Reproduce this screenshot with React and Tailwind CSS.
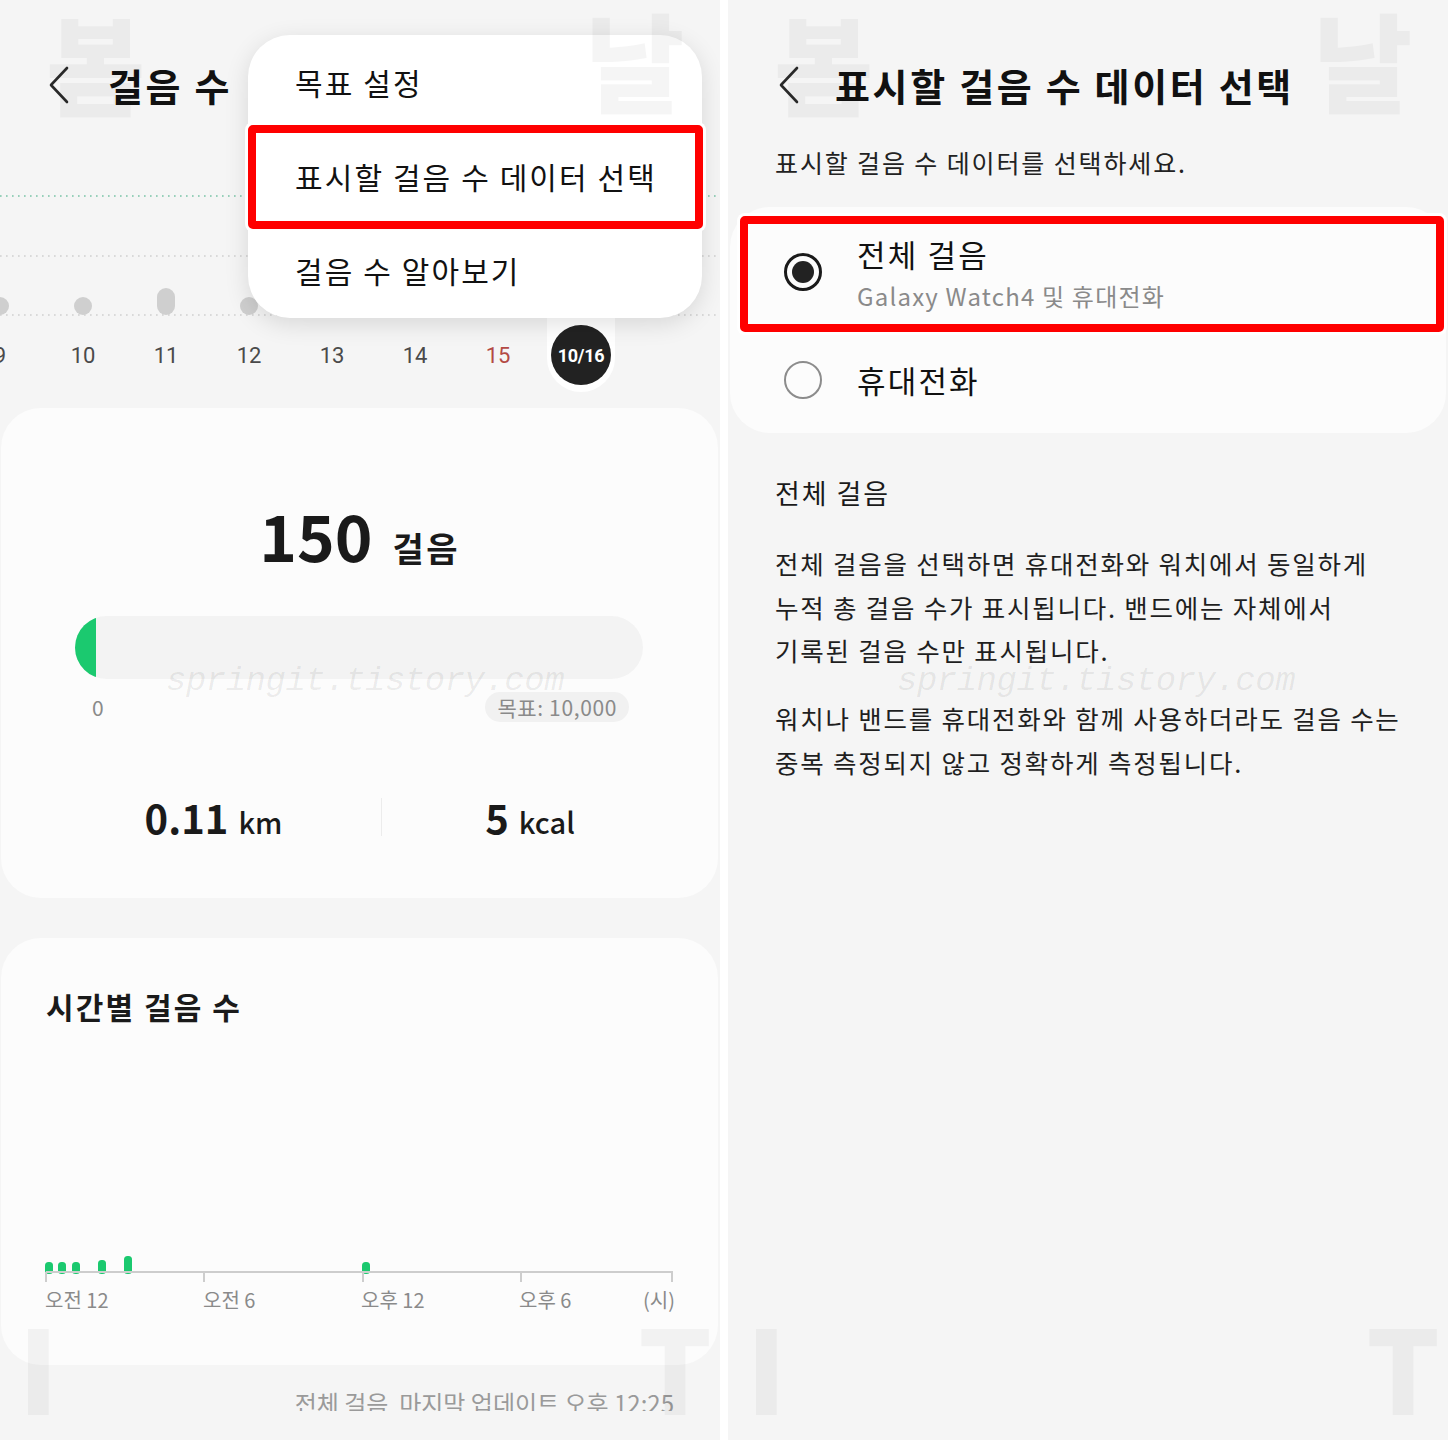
import React from "react";

const Chevron = () => (
  <svg width="22" height="38" viewBox="0 0 22 38" className="shrink-0 block">
    <polyline points="19,2 3,19 19,36" fill="none" stroke="#2a2a2a" strokeWidth="2.6" strokeLinecap="round" strokeLinejoin="round" />
  </svg>
);

const Watermarks = () => (
  <div className="pointer-events-none absolute inset-0 z-40 font-black text-black/[0.04]">
    <span className="absolute left-[46px] top-[7px] text-[108px] leading-none">봄</span>
    <span className="absolute left-[585px] top-[4px] text-[108px] leading-none">날</span>
    <span className="absolute left-[18px] top-[1306px] text-[116px] leading-none">I</span>
    <span className="absolute left-[638px] top-[1306px] text-[116px] leading-none">T</span>
  </div>
);

const SiteMark = ({ left }) => (
  <div className={`pointer-events-none absolute top-[664px] z-40 font-['Liberation_Mono',monospace] italic text-[34px] leading-none tracking-[-0.5px] text-black/[0.07] ${left}`}>
    springit.tistory.com
  </div>
);

function LeftPanel() {
  const dates = ["9", "10", "11", "12", "13", "14", "15"];
  const bars = [
    { x: 45, top: 1262 },
    { x: 58, top: 1262 },
    { x: 72, top: 1262 },
    { x: 98, top: 1260 },
    { x: 124, top: 1256 },
    { x: 362, top: 1262 },
  ];
  return (
    <div className="relative w-[720px] h-full shrink-0 bg-[#f5f5f5] overflow-hidden">
      {/* header */}
      <div className="flex items-center h-[50px] mt-[60px] pl-[48px]">
        <Chevron />
        <span className="ml-[38px] text-[38px] font-bold leading-none text-[#111] tracking-[0.07em]">걸음 수</span>
      </div>

      {/* weekly chart */}
      <svg width="720" height="208" className="block">
        <line x1="0" y1="86" x2="720" y2="86" stroke="#78c3a6" strokeWidth="1.6" strokeDasharray="1.6 4.4" />
        <line x1="0" y1="146" x2="720" y2="146" stroke="#cfcfcf" strokeWidth="1.6" strokeDasharray="1.6 4.4" />
        <line x1="0" y1="205" x2="720" y2="205" stroke="#cfcfcf" strokeWidth="1.6" strokeDasharray="1.6 4.4" />
        <circle cx="0" cy="196" r="9" fill="#cfcfcf" />
        <circle cx="83" cy="196" r="9" fill="#cfcfcf" />
        <rect x="157" y="178" width="18" height="27" rx="9" fill="#cfcfcf" />
        <circle cx="249" cy="196" r="9" fill="#cfcfcf" />
      </svg>

      {/* date labels */}
      <div className="flex h-[74px] -ml-[41.5px]">
        {dates.map((d) => (
          <div
            key={d}
            className={`w-[83px] shrink-0 flex items-center justify-center text-[22px] font-['Roboto',sans-serif] ${d === "15" ? "text-[#b34a44]" : "text-[#4a4a4a]"}`}
          >
            {d}
          </div>
        ))}
        <div className="w-[83px] shrink-0 flex justify-center">
          <div className="w-[68px] h-full bg-white rounded-b-[34px] flex items-center justify-center">
            <div className="w-[60px] h-[60px] rounded-full bg-[#222] flex items-center justify-center text-white text-[18px] font-bold font-['Roboto',sans-serif] tracking-[-0.3px]">
              10/16
            </div>
          </div>
        </div>
      </div>

      {/* summary card */}
      <div className="mt-[16px] ml-[1px] w-[717px] h-[490px] rounded-[40px] bg-[#fcfcfc] flex flex-col">
        <div className="pt-[94px] flex items-baseline justify-center text-[#1a1a1a]">
          <span className="text-[64px] font-bold leading-none">150</span>
          <span className="ml-[20px] text-[34px] font-bold leading-none tracking-[0.07em]">걸음</span>
        </div>
        <div className="mt-[50px] ml-[74px] w-[568px] h-[63px] rounded-full bg-[#f3f3f3] overflow-hidden">
          <div className="w-[21px] h-full bg-[#1bc96f]" />
        </div>
        <div className="mt-[13px] ml-[74px] w-[554px] flex items-center justify-between">
          <span className="pl-[17px] text-[21px] text-[#8a8a8a] leading-none">0</span>
          <span className="h-[30px] px-[12px] rounded-full bg-[#f1f1f1] flex items-center text-[21px] text-[#8a8a8a] leading-none tracking-[0.03em]">
            목표: 10,000
          </span>
        </div>
        <div className="mt-[75px] ml-[45px] flex items-center">
          <div className="w-[335px] flex items-baseline justify-center text-[#1a1a1a]">
            <span className="text-[40px] font-bold leading-none">0.11</span>
            <span className="ml-[10px] text-[29px] font-medium leading-none">km</span>
          </div>
          <div className="w-px h-[38px] bg-[#ececec]" />
          <div className="w-[296px] flex items-baseline justify-center text-[#1a1a1a]">
            <span className="text-[40px] font-bold leading-none">5</span>
            <span className="ml-[10px] text-[29px] font-medium leading-none">kcal</span>
          </div>
        </div>
      </div>

      {/* hourly card */}
      <div className="mt-[40px] ml-[1px] w-[717px] h-[427px] rounded-[40px] bg-[#fcfcfc] flex flex-col">
        <div className="pt-[46px] pl-[45px] text-[30px] font-bold leading-[44px] text-[#1a1a1a] tracking-[0.07em]">시간별 걸음 수</div>
        <svg width="680" height="46" className="block mt-[212px]">
          {bars.map((b, i) => (
            <rect key={i} x={b.x - 1} y={b.top - 1240} width="8" height={1272 - b.top + 2} rx="3.5" fill="#1bc96f" />
          ))}
          <line x1="45" y1="32" x2="672" y2="32" stroke="#cdcdcd" strokeWidth="2" />
          {[45, 203, 362, 520, 671].map((x) => (
            <line key={x} x1={x} y1="32" x2={x} y2="42" stroke="#cdcdcd" strokeWidth="2" />
          ))}
        </svg>
        <div className="ml-[44px] w-[630px] flex text-[20px] leading-[28px] text-[#8a8a8a]">
          <span className="w-[158px]">오전 12</span>
          <span className="w-[158px]">오전 6</span>
          <span className="w-[158px]">오후 12</span>
          <span className="flex-1 flex justify-between">
            <span>오후 6</span>
            <span>(시)</span>
          </span>
        </div>
      </div>

      {/* clipped footer */}
      <div className="h-[46px] overflow-hidden flex justify-end pr-[46px]">
        <span className="pt-[26px] text-[24px] leading-none text-[#9a9a9a] whitespace-pre">전체 걸음  마지막 업데이트 오후 12:25</span>
      </div>

      {/* popup menu */}
      <div className="absolute left-[248px] top-[35px] w-[454px] h-[283px] rounded-[42px] bg-white shadow-[0_6px_24px_rgba(0,0,0,0.12)] z-20 flex flex-col">
        {["목표 설정", "표시할 걸음 수 데이터 선택", "걸음 수 알아보기"].map((t) => (
          <div key={t} className="h-[94px] flex items-center pl-[47px] text-[30px] text-[#111] leading-none tracking-[0.07em]">
            {t}
          </div>
        ))}
      </div>

      {/* highlight box */}
      <div className="absolute left-[248px] top-[125px] w-[455px] h-[104px] border-[8px] border-[#ff0000] rounded-[5px] shadow-[0_0_0_3px_#ffffff] z-30" />

      <SiteMark left="left-[166px]" />
      <Watermarks />
    </div>
  );
}

function Radio({ on }) {
  return on ? (
    <div className="w-[38px] h-[38px] rounded-full border-[3px] border-[#1a1a1a] flex items-center justify-center shrink-0">
      <div className="w-[22px] h-[22px] rounded-full bg-[#222]" />
    </div>
  ) : (
    <div className="w-[38px] h-[38px] rounded-full border-2 border-[#8c8c8c] shrink-0" />
  );
}

function RightPanel() {
  return (
    <div className="relative w-[720px] h-full shrink-0 bg-[#f5f5f5] overflow-hidden">
      <div className="flex items-center h-[50px] mt-[60px] pl-[50px]">
        <Chevron />
        <span className="ml-[35px] text-[38px] font-bold leading-none text-[#111] tracking-[0.07em]">표시할 걸음 수 데이터 선택</span>
      </div>

      <div className="mt-[35px] pl-[47px] text-[25px] leading-[35px] text-[#222] tracking-[0.075em]">표시할 걸음 수 데이터를 선택하세요.</div>

      <div className="mt-[27px] ml-[2px] w-[716px] h-[226px] rounded-[40px] bg-[#fcfcfc] pt-[18px] flex flex-col gap-[14px]">
        <div className="h-[94px] flex items-center pl-[54px]">
          <Radio on />
          <div className="ml-[35px] flex flex-col">
            <span className="text-[31px] leading-[42px] text-[#111] tracking-[0.07em]">전체 걸음</span>
            <span className="mt-[5px] text-[24px] leading-[32px] text-[#8a8a8a] tracking-[0.05em]">Galaxy Watch4 및 휴대전화</span>
          </div>
        </div>
        <div className="h-[94px] flex items-center pl-[54px]">
          <Radio />
          <span className="ml-[35px] text-[31px] leading-[42px] text-[#111] tracking-[0.07em]">휴대전화</span>
        </div>
      </div>

      <div className="mt-[41px] pl-[47px] text-[27px] leading-[38px] text-[#1a1a1a] tracking-[0.07em]">전체 걸음</div>

      <div className="mt-[29px] pl-[47px] text-[25.5px] leading-[43.5px] text-[#1f1f1f] whitespace-nowrap tracking-[0.07em]">
        <div>전체 걸음을 선택하면 휴대전화와 워치에서 동일하게</div>
        <div>누적 총 걸음 수가 표시됩니다. 밴드에는 자체에서</div>
        <div>기록된 걸음 수만 표시됩니다.</div>
        <div className="mt-[24.5px]">워치나 밴드를 휴대전화와 함께 사용하더라도 걸음 수는</div>
        <div>중복 측정되지 않고 정확하게 측정됩니다.</div>
      </div>

      <div className="absolute left-[12px] top-[216px] w-[704px] h-[116px] border-[8px] border-[#ff0000] rounded-[5px] shadow-[0_0_0_3px_#ffffff] z-30" />

      <SiteMark left="left-[169px]" />
      <Watermarks />
    </div>
  );
}

export default function App() {
  return (
    <div className="flex w-[1448px] h-[1440px] bg-white overflow-hidden font-['Noto_Sans_CJK_KR','Noto_Sans',sans-serif]">
      <LeftPanel />
      <div className="w-[8px] shrink-0 bg-white" />
      <RightPanel />
    </div>
  );
}
